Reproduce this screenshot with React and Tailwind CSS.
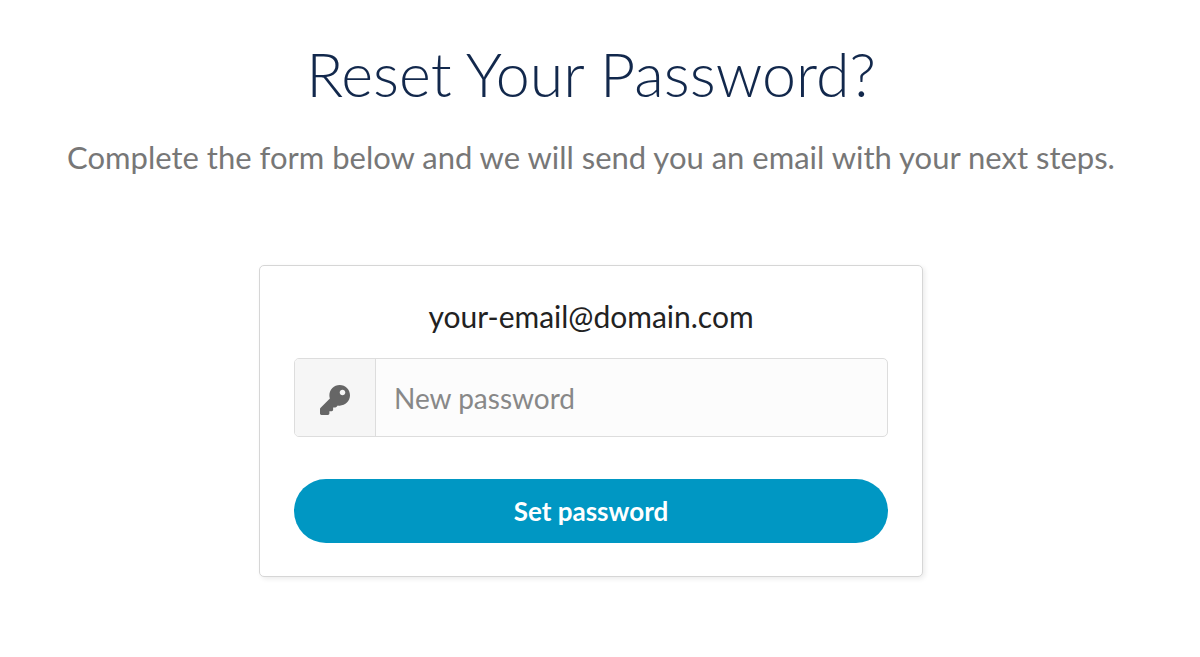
import { useState } from 'react';
import { FaKey } from 'react-icons/fa';

export default function App() {
  const [password, setPassword] = useState('');

  const handleSubmit = (e) => {
    e.preventDefault();
  };

  return (
    <main className="min-h-screen bg-white pt-[38px] pr-[50px] pb-20 pl-8 font-['Lato',sans-serif] text-center">
      <h1 className="text-[61px] leading-[72px] font-light text-[#12284c]">Reset Your Password?</h1>
      <p className="mt-6 text-[31px] leading-[46px] text-[#777]">
        Complete the form below and we will send you an email with your next steps.
      </p>
      <form
        onSubmit={handleSubmit}
        className="mx-auto mt-[85px] w-full max-w-[664px] rounded-[5px] border border-[#d6d6d6] bg-white p-[34px] pb-[33px] shadow-[2px_2px_5px_rgba(0,0,0,0.08)]"
      >
        <div className="text-[30px] leading-8 text-[#222]">your-email@domain.com</div>
        <div className="mt-[26px] flex h-[79px] rounded-[5px] border border-[#ddd] bg-[#fcfcfc]">
          <label htmlFor="password" aria-label="New password" className="flex w-[81px] shrink-0 items-center justify-center rounded-l-[4px] border-r border-[#ddd] bg-[#f6f6f6] pt-1">
            <FaKey className="size-[30px] text-[#666]" />
          </label>
          <input
            id="password"
            type="password"
            value={password}
            onChange={e => setPassword(e.target.value)}
            placeholder="New password"
            className="min-w-0 flex-1 bg-transparent px-[18px] text-[28px] text-[#333] outline-none placeholder:text-[#888]"
          />
        </div>
        <button type="submit" className="mt-[42px] h-16 w-full cursor-pointer rounded-full bg-[#0097c3] text-[26px] font-bold text-white">
          Set password
        </button>
      </form>
    </main>
  );
}
